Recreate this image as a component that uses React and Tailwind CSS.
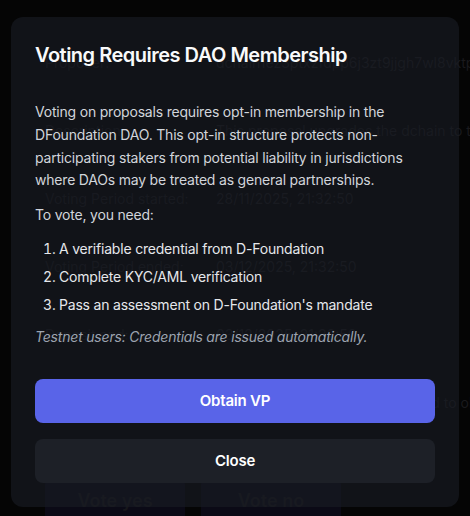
import React from "react";

const rows = [
  { label: "Proposer:", value: "dchain1ez3ptxzfdpp6j3zt9jjgh7wl8vktpqx4m2" },
  { label: "Description:", value: "This proposal upgrades the dchain to the latest release" },
  { label: "Voting Period started:", value: "28/11/2025, 21:32:50" },
  { label: "Voting Period ended:", value: "03/12/2025, 21:32:50" },
  { label: "Deposit end:", value: "03/12/2025, 21:32:50" },
  { label: "Voting power:", value: "To vote on this proposal you need to obtain a VP" },
];

export default function App() {
  return (
    <div
      className="relative w-[470px] h-[516px] overflow-hidden bg-[#050505]"
      style={{ fontFamily: "Inter, 'Noto Sans', sans-serif" }}
    >
      {/* background page, dimmed by the overlay */}
      <div className="flex flex-col pl-[45px] pt-[29px]">
        {rows.map((r) => (
          <div key={r.label} className="grid grid-cols-[171px_1fr] h-[68px] items-center text-sm">
            <span className="text-[#18181b] whitespace-nowrap">{r.label}</span>
            <span className="text-[#1a1a1d] whitespace-nowrap overflow-hidden">{r.value}</span>
          </div>
        ))}
        <div className="mt-10 flex gap-4">
          <div className="w-[140px] h-[48px] rounded-lg bg-[#0b0a16] flex items-center justify-center text-lg font-semibold text-[#17171b]">
            Vote yes
          </div>
          <div className="w-[140px] h-[48px] rounded-lg bg-[#0b0a16] flex items-center justify-center text-lg font-semibold text-[#17171b]">
            Vote no
          </div>
        </div>
      </div>

      {/* modal */}
      <div className="absolute left-[11px] top-[17px] w-[448px] rounded-xl bg-[#191c24]/60 p-6">
        <h2 className="text-xl leading-7 font-semibold tracking-[-0.5px] text-[#f9fafb]">
          Voting Requires DAO Membership
        </h2>
        <div className="mt-8 flex flex-col gap-3 text-sm tracking-[-0.2px]">
          <p className="leading-relaxed text-[#d1d5db]">
            Voting on proposals requires opt-in membership in the DFoundation DAO. This opt-in
            structure protects non-participating stakers from potential liability in jurisdictions
            where DAOs may be treated as general partnerships.
          </p>
          <p className="leading-relaxed text-[#d1d5db]">To vote, you need:</p>
          <ol className="list-decimal list-inside pl-2 flex flex-col gap-2 leading-5 text-[#e5e7eb]">
            <li>A verifiable credential from D-Foundation</li>
            <li>Complete KYC/AML verification</li>
            <li>Pass an assessment on D-Foundation's mandate</li>
          </ol>
          <p className="italic leading-5 text-[#9ca3af]">
            Testnet users: Credentials are issued automatically.
          </p>
        </div>
        <div className="mt-8 flex flex-col gap-4">
          <button className="h-11 rounded-lg bg-[#5964e8] text-[15px] font-semibold tracking-[-0.2px] text-white">
            Obtain VP
          </button>
          <button className="h-11 rounded-lg bg-[#1d2027] text-[15px] font-semibold tracking-[-0.2px] text-white">
            Close
          </button>
        </div>
      </div>
    </div>
  );
}
